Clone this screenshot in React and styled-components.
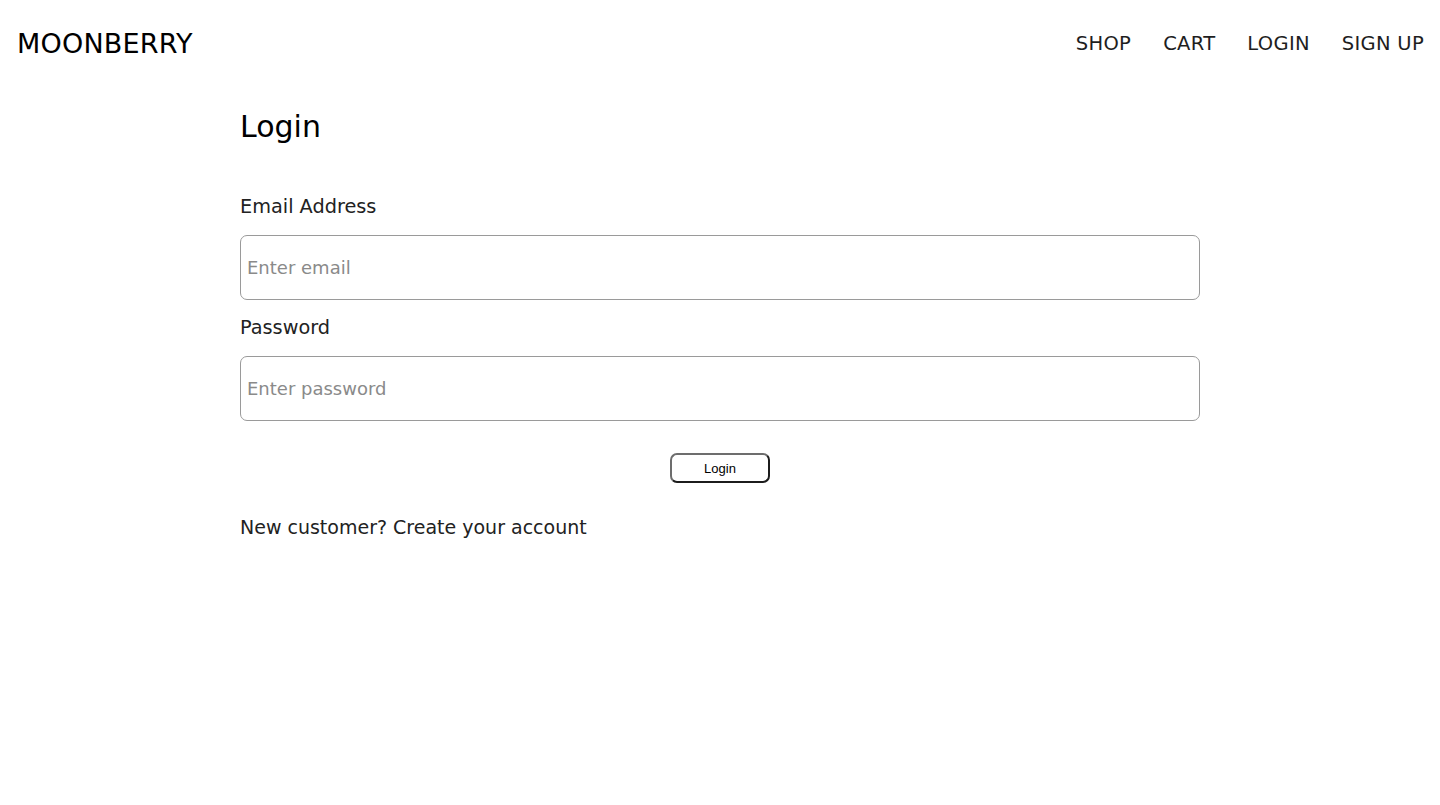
import React from "react";
import styled, { createGlobalStyle } from "styled-components";

const Global = createGlobalStyle`
  html, body { margin: 0; padding: 0; background: #fff; }
  body { font-family: "DejaVu Sans", "Noto Sans", sans-serif; color: #111; }
  * { box-sizing: border-box; }
`;

const Header = styled.header`
  display: flex;
  align-items: center;
  justify-content: space-between;
  height: 86px;
  padding: 0 16px 0 17px;
`;

const Logo = styled.a`
  font-size: 27px;
  letter-spacing: 0.2px;
  color: #000;
  text-decoration: none;
`;

const Nav = styled.nav`
  display: flex;
  gap: 32px;
`;

const NavLink = styled.a`
  font-size: 19.5px;
  font-weight: 400;
  color: #1e1e1e;
  text-decoration: none;
  letter-spacing: 0.3px;
`;

const Main = styled.main`
  max-width: 960px;
  margin: 0 auto;
  display: flex;
  flex-direction: column;
`;

const Title = styled.h1`
  margin: 25px 0 0;
  font-size: 30px;
  font-weight: 400;
  line-height: 32px;
  color: #000;
`;

const Form = styled.form`
  display: flex;
  flex-direction: column;
  margin-top: 53px;
`;

const Label = styled.label`
  font-size: 19.3px;
  line-height: 22px;
  color: #222;
  margin-bottom: 17px;
`;

const Input = styled.input`
  width: 100%;
  height: 65px;
  border: 1px solid #9a9a9a;
  border-radius: 7px;
  padding: 0 6px;
  font-family: inherit;
  font-size: 18px;
  color: #222;
  margin-bottom: ${(p) => p.$mb || 0}px;
  &::placeholder { color: #8a8a8a; }
  &:focus { outline: none; }
`;

const ButtonRow = styled.div`
  display: flex;
  justify-content: center;
  margin-top: 32px;
`;

const Button = styled.button`
  width: 100px;
  height: 30px;
  background: #fff;
  border: 2px solid;
  border-color: #6d6d6d #1c1c1c #1c1c1c #6d6d6d;
  border-radius: 7px;
  font-family: "Liberation Sans", Arial, sans-serif;
  font-size: 13px;
  color: #000;
  cursor: pointer;
`;

const Footer = styled.p`
  margin: 33px 0 0;
  font-size: 19px;
  line-height: 22px;
  color: #222;
`;

export default function App() {
  return (
    <>
      <Global />
      <Header>
        <Logo href="#">MOONBERRY</Logo>
        <Nav>
          <NavLink href="#">SHOP</NavLink>
          <NavLink href="#">CART</NavLink>
          <NavLink href="#">LOGIN</NavLink>
          <NavLink href="#">SIGN UP</NavLink>
        </Nav>
      </Header>
      <Main>
        <Title>Login</Title>
        <Form onSubmit={(e) => e.preventDefault()}>
          <Label htmlFor="email">Email Address</Label>
          <Input id="email" type="email" placeholder="Enter email" $mb={17} />
          <Label htmlFor="password">Password</Label>
          <Input id="password" type="password" placeholder="Enter password" />
          <ButtonRow>
            <Button type="submit">Login</Button>
          </ButtonRow>
        </Form>
        <Footer>New customer? Create your account</Footer>
      </Main>
    </>
  );
}
